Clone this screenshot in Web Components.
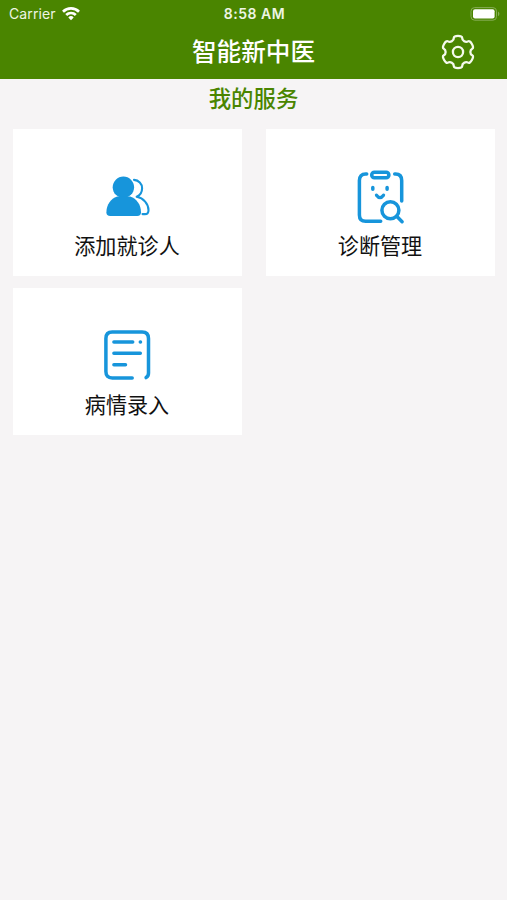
<!DOCTYPE html>
<html lang="zh-CN">
<head>
<meta charset="UTF-8">
<title>智能新中医</title>
<style>
    body {
        margin: 0;
        background: #f6f4f5;
        font-family: "Noto Sans CJK SC", sans-serif;
    }
</style>
</head>
<body>
<clinic-app></clinic-app>

<script>
class StatusBar extends HTMLElement {
    constructor() {
        super();
        this.shadow = this.attachShadow({ mode: 'open' });
    }

    connectedCallback() {
        this.shadow.innerHTML = `
      <style>
        :host {
            display: grid;
            grid-template-columns: 1fr auto 1fr;
            align-items: center;
            height: 27px;
            padding: 0 7px 0 9px;
            box-sizing: border-box;
            color: #eef5e4;
            font: 14px/27px Inter, sans-serif;
        }

        .carrier {
            display: flex;
            align-items: center;
            gap: 6px;
            letter-spacing: 0.1px;
        }

        .time {
            padding-top: 1px;
            font-size: 14px;
            line-height: 26px;
            font-weight: 600;
            letter-spacing: 0.5px;
        }

        svg {
            display: block;
        }

        .battery {
            justify-self: end;
        }
      </style>
      <div class="carrier">
        <span>Carrier</span>
        <svg width="18" height="15" viewBox="0 0 18 15" fill="none" stroke="#fff" stroke-width="2.7">
            <path d="M1 5.7a11.4 11.4 0 0 1 16 0"/>
            <path d="M4.2 9a6.8 6.8 0 0 1 9.6 0"/>
            <path d="M6.3 11.4a3.8 3.8 0 0 1 5.4 0L9 14.2z" fill="#fff" stroke="none"/>
        </svg>
      </div>
      <span class="time">8:58 AM</span>
      <svg class="battery" width="30" height="14" viewBox="0 0 30 14">
        <rect x="1" y="0.6" width="25.5" height="12.6" rx="3.6" fill="none" stroke="#86ad55"/>
        <rect x="3" y="2.2" width="21.6" height="9.4" rx="2" fill="#fff"/>
        <path d="M28 4.6c1.9.8 1.9 3.8 0 4.6z" fill="#86ad55"/>
      </svg>
    `;
    }
}

class GearIcon extends HTMLElement {
    constructor() {
        super();
        this.shadow = this.attachShadow({ mode: 'open' });
    }

    connectedCallback() {
        this.shadow.innerHTML = `
      <style>
        :host {
            display: block;
            width: 36px;
            height: 36px;
        }

        svg {
            display: block;
            fill: none;
            stroke: #f5faec;
            stroke-width: 2.3;
        }
      </style>
      <svg width="36" height="36" viewBox="-18 -18 36 36">
        <path d="${this.outline()}"/>
        <circle r="5.1"/>
      </svg>
    `;
    }

    // six teeth, corners rounded by curves between the edge midpoints
    outline() {
        const points = [];
        for (let i = 0; i < 6; i++) {
            [[-15, 16.6], [15, 16.6], [19, 12.6], [41, 12.6]].forEach(([angle, r]) => {
                const a = (i * 60 + angle - 90) * Math.PI / 180;
                points.push([r * Math.cos(a), r * Math.sin(a)]);
            });
        }
        const mid = (p, q) => [(p[0] + q[0]) / 2, (p[1] + q[1]) / 2];
        const last = points[points.length - 1];
        let d = 'M' + mid(last, points[0]);
        points.forEach((p, i) => {
            d += 'Q' + p + ' ' + mid(p, points[(i + 1) % points.length]);
        });
        return d + 'Z';
    }
}

class NavHeader extends HTMLElement {
    constructor() {
        super();
        this.shadow = this.attachShadow({ mode: 'open' });
    }

    connectedCallback() {
        this.shadow.innerHTML = `
      <style>
        :host {
            display: block;
            height: 79px;
            background: #4a8500;
        }

        .bar {
            display: grid;
            grid-template-columns: 1fr auto 1fr;
            align-items: center;
            height: 50px;
            padding: 0 31px;
        }

        h1 {
            grid-column: 2;
            margin: 0;
            color: #fff;
            font-size: 24.6px;
            font-weight: 500;
            line-height: 46px;
            padding-bottom: 4px;
        }

        gear-icon {
            justify-self: end;
        }
      </style>
      <status-bar></status-bar>
      <div class="bar">
        <h1><slot></slot></h1>
        <gear-icon></gear-icon>
      </div>
    `;
    }
}

const ICONS = {
    people: `
        <circle cx="26.7" cy="22.2" r="10.7" fill="currentColor" stroke="none"/>
        <path d="M20.5 31.5H33.5C40 33.6 44.3 40 44.3 47.2Q44.3 51 40.5 51H13.5Q9.7 51 9.7 47.2C9.7 40 14 33.6 20.5 31.5Z" fill="currentColor" stroke="none"/>
        <path d="M37.3 14.9C42 15.2 45.4 18.7 45.4 23.2C45.4 27 43.4 30.2 40 31.8C46.8 33.2 51.8 38.8 51.8 45.2Q51.8 49.1 48.3 49.1H45.8" stroke-width="2.1"/>`,
    diagnosis: `
        <path d="M17 9H16Q9.7 9 9.7 15.5V50Q9.7 56.3 16 56.3H31"/>
        <path d="M45 9H45.8Q52 9 52 15.5V36"/>
        <rect x="22" y="7.3" width="17.2" height="5.4" rx="2.7"/>
        <path d="M23.1 22.5V24.2M37.4 22.5V24.2"/>
        <path d="M26.8 30.2Q30.3 35 33.8 30.2" stroke-width="3.3"/>
        <circle cx="40.7" cy="45.2" r="8.5"/>
        <path d="M47 51.3L52.4 56.7"/>`,
    record: `
        <path d="M35.5 54H15.5Q9.2 54 9.2 47.5V14.5Q9.2 8 15.5 8H45.4Q51.8 8 51.8 14.5V49Q51.8 52.2 49.4 53.6"/>
        <path d="M17.2 18H36M43.6 18H43.8M17.2 29.3H43.6M17.2 40.8H28.8"/>`
};

class ServiceCard extends HTMLElement {
    constructor() {
        super();
        this.shadow = this.attachShadow({ mode: 'open' });
    }

    connectedCallback() {
        this.shadow.innerHTML = `
      <style>
        :host {
            display: flex;
            flex-direction: column;
            align-items: center;
            height: 147px;
            padding-top: 36px;
            box-sizing: border-box;
            background: #fff;
            color: #111;
            font-size: 21.1px;
            line-height: 40px;
        }

        svg {
            display: block;
            color: #1795db;
            fill: none;
            stroke: currentColor;
            stroke-width: 3.5;
            stroke-linecap: round;
            stroke-linejoin: round;
        }

        .label {
            padding-right: 1px;
        }
      </style>
      <svg width="61" height="60" viewBox="0.3 0 61 60">${ICONS[this.getAttribute('icon')]}</svg>
      <span class="label"><slot></slot></span>
    `;
    }
}

class ClinicApp extends HTMLElement {
    constructor() {
        super();
        this.shadow = this.attachShadow({ mode: 'open' });
    }

    connectedCallback() {
        this.shadow.innerHTML = `
      <style>
        :host {
            display: block;
            min-height: 900px;
        }

        h2 {
            margin: 0;
            padding-bottom: 2px;
            color: #4a8500;
            font-size: 22.4px;
            font-weight: 500;
            line-height: 36px;
            text-align: center;
        }

        .services {
            display: grid;
            grid-template-columns: 1fr 1fr;
            gap: 12px 24px;
            padding: 12px 12px 0 13px;
        }
      </style>
      <nav-header>智能新中医</nav-header>
      <h2>我的服务</h2>
      <div class="services">
        <service-card icon="people">添加就诊人</service-card>
        <service-card icon="diagnosis">诊断管理</service-card>
        <service-card icon="record">病情录入</service-card>
      </div>
    `;
    }
}

customElements.define('status-bar', StatusBar);
customElements.define('gear-icon', GearIcon);
customElements.define('nav-header', NavHeader);
customElements.define('service-card', ServiceCard);
customElements.define('clinic-app', ClinicApp);
</script>
</body>
</html>
